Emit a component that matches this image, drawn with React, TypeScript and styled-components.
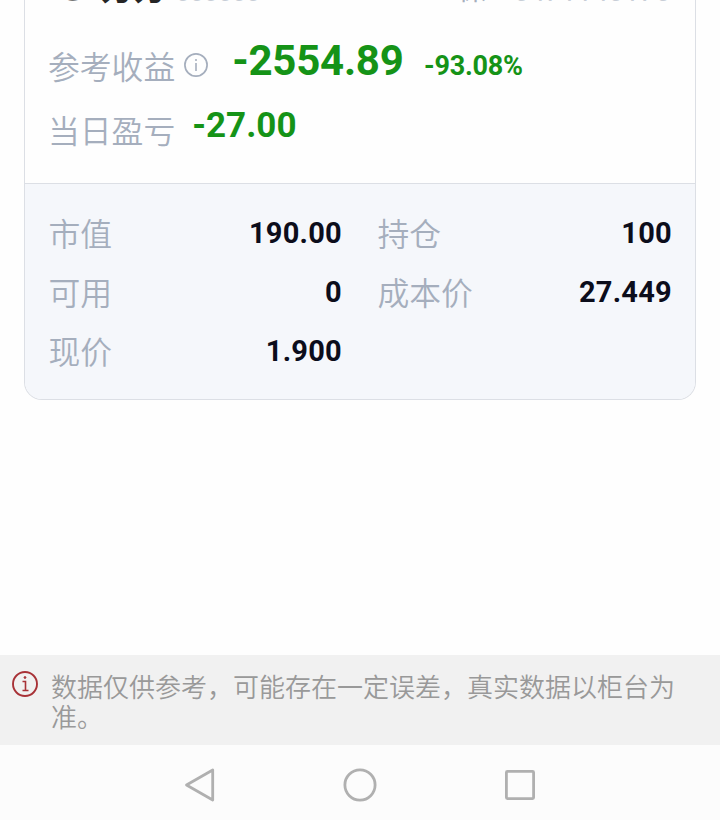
import React from "react";
import styled, { createGlobalStyle } from "styled-components";

const GlobalStyle = createGlobalStyle`
  * { box-sizing: border-box; }
  body { margin: 0; background: #fefefe; }
`;

const Screen = styled.main`
  width: 720px;
  height: 820px;
  display: flex;
  flex-direction: column;
  overflow: hidden;
  background: #fefefe;
  font-family: Roboto, "Noto Sans CJK SC", sans-serif;
`;

const Content = styled.div`
  height: 655px;
  padding: 0 24px;
`;

const Card = styled.section`
  height: 400px;
  border: 1px solid #dcdfe5;
  border-top: 0;
  border-radius: 0 0 18px 18px;
  overflow: hidden;
`;

const Header = styled.header`
  height: 8px;
  padding: 0 24px;
  display: flex;
  align-items: flex-end;
  justify-content: space-between;
  overflow: hidden;
`;

const HeaderGroup = styled.div`
  display: flex;
  align-items: flex-end;
  white-space: pre;
`;

const StockName = styled.span`
  color: #252525;
  font-size: 33px;
  font-weight: 700;
  line-height: 37px;
`;

const StockFlag = styled.span`
  display: inline-block;
  width: 52px;
  color: #777;
  font-size: 31px;
  font-weight: 500;
  transform: translateY(0.6px);
`;

const StockCode = styled.span`
  margin-left: 9px;
  color: #c8ced7;
  font-size: 25px;
  line-height: 32px;
  transform: translateY(1px);
`;

const Quote = styled.span`
  color: #a5aebd;
  font-size: 28px;
  line-height: 34px;
  white-space: pre;
`;

const QuoteDigits = styled.span`
  display: inline-block;
  color: #c8ced7;
  transform: translateY(0.7px);
`;

const Summary = styled.div`
  height: 175px;
  padding: 25px 24px 0;
`;

const SummaryRow = styled.div`
  height: 64px;
  display: flex;
  align-items: baseline;
  line-height: 64px;
  white-space: nowrap;
`;

const Label = styled.span`
  margin-left: -1px;
  color: #a5aebd;
  font-family: "Noto Sans CJK SC", sans-serif;
  font-size: 31.8px;
  font-weight: 350;
`;

const Amount = styled.strong<{ $size: number; $gap: number; $lift: number; $spacing?: number }>`
  margin-left: ${(p) => p.$gap}px;
  color: #159317;
  font-size: ${(p) => p.$size}px;
  font-weight: 700;
  letter-spacing: ${(p) => p.$spacing ?? 0}px;
  transform: translateY(${(p) => -p.$lift}px);
`;

const InfoIcon = styled.svg`
  align-self: flex-start;
  width: 24px;
  height: 24px;
  margin: 20px 0 0 9px;
  flex: none;
`;

const Details = styled.div`
  height: 216px;
  padding: 19px 24px 0;
  display: grid;
  grid-template-columns: 293px 294px;
  grid-template-rows: repeat(3, 59px);
  column-gap: 36px;
  border-top: 1px solid #dcdfe5;
  background: #f5f7fb;
`;

const DetailRow = styled.div`
  display: flex;
  justify-content: space-between;
  line-height: 59px;

  ${Label} {
    margin-left: 0;
    text-indent: -0.5px;
  }
`;

const DetailValue = styled.strong`
  padding-top: 1px;
  color: #0c0d1b;
  font-size: 29px;
  font-weight: 700;
  letter-spacing: 0.25px;
`;

const Notice = styled.aside`
  height: 90px;
  padding: 16px 40px 0 12px;
  display: flex;
  background: #f1f1f1;
`;

const NoticeIcon = styled.svg`
  width: 26px;
  height: 26px;
  flex: none;
`;

const NoticeText = styled.p`
  width: 640px;
  margin: 0 0 0 13px;
  color: #999;
  font-family: "Noto Sans CJK SC", sans-serif;
  font-size: 26px;
  font-weight: 350;
  line-height: 30px;
`;

const Navigation = styled.nav`
  height: 75px;
  padding: 0 120px;
  display: grid;
  grid-template-columns: repeat(3, 160px);
  place-items: center;
  background: #fcfcfc;
`;

const NavIcon = styled.svg`
  width: 40px;
  height: 40px;
  margin-top: 5px;
  fill: none;
  stroke: #b0b0b0;
  stroke-width: 2.8;
  stroke-linejoin: round;
`;

const details = [
  ["市值", "190.00"],
  ["持仓", "100"],
  ["可用", "0"],
  ["成本价", "27.449"],
  ["现价", "1.900"],
];

export default function App() {
  return (
    <Screen>
      <GlobalStyle />
      <Content>
        <Card>
          <Header>
            <HeaderGroup>
              <StockName><StockFlag>*S</StockFlag>方方</StockName>
              <StockCode>000000</StockCode>
            </HeaderGroup>
            <Quote>保    <QuoteDigits>0471140170</QuoteDigits></Quote>
          </Header>
          <Summary>
            <SummaryRow>
              <Label>参考收益</Label>
              <InfoIcon viewBox="0 0 24 24" fill="none" stroke="#a5aebd">
                <circle cx="12" cy="12" r="11.1" strokeWidth="1.7" />
                <path d="M12 10v8" strokeWidth="1.6" />
                <circle cx="12" cy="7" r=".6" fill="#a5aebd" />
              </InfoIcon>
              <Amount $size={42} $gap={24} $lift={4} $spacing={-0.25}>-2554.89</Amount>
              <Amount $size={27} $gap={20.5} $lift={4} $spacing={-0.25}>-93.08%</Amount>
            </SummaryRow>
            <SummaryRow>
              <Label>当日盈亏</Label>
              <Amount $size={35} $gap={17} $lift={6}>-27.00</Amount>
            </SummaryRow>
          </Summary>
          <Details>
            {details.map(([label, value]) => (
              <DetailRow key={label}>
                <Label>{label}</Label>
                <DetailValue>{value}</DetailValue>
              </DetailRow>
            ))}
          </Details>
        </Card>
      </Content>
      <Notice>
        <NoticeIcon viewBox="0 0 26 26" fill="none" stroke="#a83237" strokeWidth="1.9">
          <circle cx="13" cy="13" r="12" />
          <path d="M10.5 10.5h3v9M10.5 19.5h6" strokeWidth="1.6" />
          <circle cx="13" cy="6.5" r=".9" fill="#a83237" strokeWidth="1" />
        </NoticeIcon>
        <NoticeText>数据仅供参考，可能存在一定误差，真实数据以柜台为准。</NoticeText>
      </Notice>
      <Navigation>
        <NavIcon viewBox="0 0 40 40"><path d="M6.5 20 32.7 5v30Z" /></NavIcon>
        <NavIcon viewBox="0 0 40 40"><circle cx="20" cy="20" r="15.1" /></NavIcon>
        <NavIcon viewBox="0 0 40 40"><rect x="6.4" y="6.4" width="27.2" height="27.2" rx="1" /></NavIcon>
      </Navigation>
    </Screen>
  );
}
